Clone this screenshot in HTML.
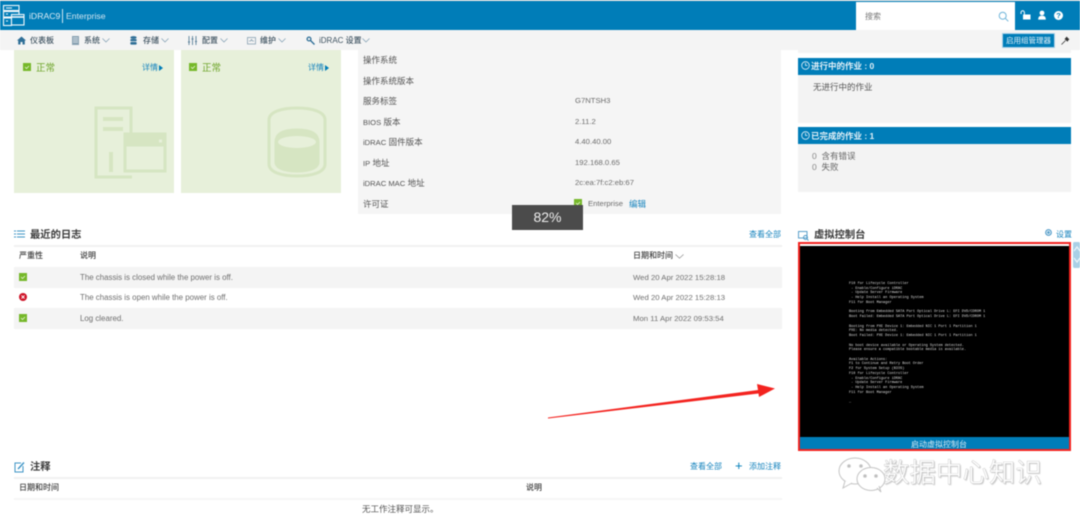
<!DOCTYPE html>
<html lang="zh"><head><meta charset="utf-8"><title>iDRAC9</title>
<style>
*{box-sizing:border-box}
html,body{margin:0;padding:0;background:#fff}
body{width:1080px;height:522px;overflow:hidden}
#p{position:relative;width:1080px;height:522px;overflow:hidden;font-family:"Liberation Sans","Noto Sans CJK SC",sans-serif;color:#555;filter:blur(.45px)}
#p div,#p svg{position:absolute}
.t{white-space:nowrap;line-height:1}
.n{font-size:8px;color:#3f5361;font-weight:500;top:36.500px}
.k{font-size:8.500px;color:#555;left:363px}
.k i{font-style:normal;font-size:7.600px}
.v{font-size:7.700px;color:#6c6c6c;left:575px}
.h{font-size:10.300px;font-weight:700;color:#3a3a3a}
.b{font-size:8px;color:#1583bd}
.s{font-size:8px;color:#3e3e3e;font-weight:500}
.g{font-size:7.900px;color:#6f6f6f}
.d{font-size:7.750px;color:#6f6f6f;left:633px}
.blue{background:#007db8}
</style></head><body><div id="p">

<div class="blue" style="left:0;top:1px;width:1080px;height:29px"></div>
<div style="left:0;top:0;width:1080px;height:1px;background:#ddd"></div>
<svg style="left:0;top:0" width="28" height="30" viewBox="0 0 28 30" fill="none" stroke="#f2f8fb" stroke-width="1.100"><rect x="3.500" y="5.500" width="15.500" height="5"/><rect x="3.500" y="11.500" width="15.500" height="5.500"/><rect x="3.500" y="18" width="8" height="7.500"/><path d="M6 8h6M6 14h2M6 21h2"/><rect x="11.500" y="14.500" width="12.500" height="10.500" fill="#007db8"/><path d="M11.500 17h12.500" stroke-width="1.600"/></svg>
<div class="t" style="left:29px;top:12px;font-size:8.700px;color:#dcecf5">iDRAC9</div>
<div style="left:62px;top:9px;width:1px;height:14px;background:#cfe5f1"></div>
<div class="t" style="left:66px;top:12px;font-size:8.700px;color:#cfe4f0">Enterprise</div>
<div style="left:856px;top:2px;width:159px;height:28px;background:#fff"></div>
<div class="t" style="left:865px;top:12.500px;font-size:8px;color:#777">搜索</div>
<svg style="left:998px;top:11px" width="11" height="11" viewBox="0 0 11 11" fill="none" stroke="#6fb5da" stroke-width="1"><circle cx="4.700" cy="4.700" r="3.500"/><path d="M7.300 7.300l3 3"/></svg>
<svg style="left:1020px;top:10px" width="11" height="10" viewBox="0 0 11 10" fill="none"><rect x="3" y="4.500" width="7.500" height="5" fill="#fff"/><path d="M1 4V2.500a1.700 1.700 0 0 1 3.400 0V5" stroke="#fff"/></svg>
<svg style="left:1037px;top:10px" width="10" height="10" viewBox="0 0 10 10" fill="#fff"><circle cx="5" cy="3" r="2.400"/><path d="M1.200 9.600c0-3 1.500-3.800 3.800-3.800s3.800.8 3.800 3.800z"/></svg>
<div style="left:1054px;top:11px;width:9px;height:9px;border-radius:50%;background:#fff;color:#007db8;font-size:7.500px;font-weight:700;line-height:9px;text-align:center">?</div>

<div style="left:0;top:30px;width:1080px;height:20px;background:#f4f4f4"></div>
<svg style="left:17px;top:36px" width="9" height="9" viewBox="0 0 9 9" fill="#2f6f97"><path d="M4.500.5L9 4.500H7.800V8.500H5.500V6H3.500V8.500H1.200V4.500H0z"/></svg>
<div class="t n" style="left:30px">仪表板</div>
<svg style="left:72px;top:36px" width="7" height="9" viewBox="0 0 7 9"><rect width="7" height="9" fill="#8aa2b2"/><path d="M1 2h5M1 4h5M1 6h5" stroke="#e8eef2" stroke-width=".7"/></svg>
<div class="t n" style="left:84px">系统</div>
<svg style="left:102px;top:38px" width="8" height="5" viewBox="0 0 8 5" fill="none" stroke="#7b9bb0" stroke-width=".7"><path d="M.5.5L4 4 7.500.5"/></svg>
<svg style="left:130px;top:36px" width="7" height="9" viewBox="0 0 7 9" fill="#2f6f97"><ellipse cx="3.500" cy="1.500" rx="3.200" ry="1.400"/><rect x=".3" y="3" width="6.400" height="2.200" rx="1"/><rect x=".3" y="6" width="6.400" height="2.600" rx="1"/></svg>
<div class="t n" style="left:143px">存储</div>
<svg style="left:161px;top:38px" width="8" height="5" viewBox="0 0 8 5" fill="none" stroke="#7b9bb0" stroke-width=".7"><path d="M.5.5L4 4 7.500.5"/></svg>
<svg style="left:188px;top:36px" width="9" height="9" viewBox="0 0 9 9" fill="none" stroke="#5b8099" stroke-width=".9"><path d="M1 0v9M4.500 0v9M8 0v9M0 6h2M3.500 3h2M7 5.500h2"/></svg>
<div class="t n" style="left:202px">配置</div>
<svg style="left:220px;top:38px" width="8" height="5" viewBox="0 0 8 5" fill="none" stroke="#7b9bb0" stroke-width=".7"><path d="M.5.5L4 4 7.500.5"/></svg>
<svg style="left:247px;top:37px" width="9" height="8" viewBox="0 0 9 8" fill="none" stroke="#8aa2b2" stroke-width=".8"><rect x=".5" y=".5" width="8" height="6.500"/><path d="M2 4h1.500l1-1.500L5.500 4H7"/></svg>
<div class="t n" style="left:260px">维护</div>
<svg style="left:278px;top:38px" width="8" height="5" viewBox="0 0 8 5" fill="none" stroke="#7b9bb0" stroke-width=".7"><path d="M.5.5L4 4 7.500.5"/></svg>
<svg style="left:306px;top:36px" width="9" height="9" viewBox="0 0 9 9" fill="none" stroke="#2f6f97" stroke-width="1.300"><circle cx="3" cy="3" r="1.900"/><path d="M4.500 4.500L8.500 8.500"/></svg>
<div class="t n" style="left:319px">iDRAC 设置</div>
<svg style="left:362px;top:38px" width="8" height="5" viewBox="0 0 8 5" fill="none" stroke="#7b9bb0" stroke-width=".7"><path d="M.5.5L4 4 7.500.5"/></svg>
<div class="t blue" style="left:1002px;top:33px;width:53px;height:15px;border:1px solid #a9d0e6;color:#e4f1f8;font-size:7.500px;line-height:14px;text-align:center">启用组管理器</div>
<svg style="left:1061px;top:36px" width="9" height="9" viewBox="0 0 9 9" fill="#333"><path d="M5.500.5L8.500 3.500 7.500 4 6.500 5.800 3.500 3 5 1.500z"/><path d="M4.500 4.500L.5 8.500" stroke="#333" stroke-width=".8"/></svg>

<!-- cards -->
<div style="left:14px;top:50px;width:160px;height:143px;background:#e7f0da"></div>
<div style="left:181px;top:50px;width:160px;height:143px;background:#e7f0da"></div>
<svg style="left:23px;top:63px" width="8" height="8" viewBox="0 0 8 8"><rect width="8" height="8" fill="#76b82a"/><path d="M2 4l1.500 1.500L6 3" fill="none" stroke="#e8f4d8" stroke-width=".8"/></svg>
<div class="t" style="left:36px;top:63.500px;font-size:9.500px;color:#6ea52a">正常</div>
<div class="t b" style="left:142px;top:63.500px">详情</div>
<div style="left:159px;top:64.500px;border-left:4px solid #007db8;border-top:3px solid transparent;border-bottom:3px solid transparent"></div>
<svg style="left:189px;top:63px" width="8" height="8" viewBox="0 0 8 8"><rect width="8" height="8" fill="#76b82a"/><path d="M2 4l1.500 1.500L6 3" fill="none" stroke="#e8f4d8" stroke-width=".8"/></svg>
<div class="t" style="left:202px;top:63.500px;font-size:9.500px;color:#6ea52a">正常</div>
<div class="t b" style="left:308px;top:63.500px">详情</div>
<div style="left:325px;top:64.500px;border-left:4px solid #007db8;border-top:3px solid transparent;border-bottom:3px solid transparent"></div>
<svg style="left:94px;top:106px" width="74" height="74" viewBox="0 0 74 74" fill="none" stroke="#d6e5c2"><path d="M37 27V2H2v69h36" stroke-width="3"/><path d="M9 13h20M9 23h20" stroke-width="4"/><path d="M17 46v20" stroke-width="4"/><rect x="31" y="28" width="40" height="37" stroke-width="3"/><path d="M31 35h40" stroke-width="11"/><path d="M65 35h3" stroke="#e7f0da" stroke-width="3"/></svg>
<svg style="left:267px;top:106px" width="60" height="72" viewBox="0 0 60 72" fill="none" stroke="#d6e5c2" stroke-width="3"><path d="M2 14C2 6 14 2 30 2s28 4 28 12v44c0 8-12 12-28 12S2 66 2 58z"/><path d="M9 36c0-9 9-12 21-12s21 3 21 12v20c0 6-9 9-21 9S9 62 9 56z" fill="#d6e5c2"/><ellipse cx="30" cy="36" rx="19" ry="6" fill="#e7f0da" stroke="none"/></svg>

<!-- info -->
<div style="left:358px;top:50px;width:423px;height:164px;background:#f5f5f5"></div>
<div class="t k" style="top:56px">操作系统</div>
<div class="t k" style="top:76.500px">操作系统版本</div>
<div class="t k" style="top:97px">服务标签</div>
<div class="t k" style="top:118px"><i>BIOS</i> 版本</div>
<div class="t k" style="top:138px"><i>iDRAC</i> 固件版本</div>
<div class="t k" style="top:159px"><i>IP</i> 地址</div>
<div class="t k" style="top:179px"><i>iDRAC MAC</i> 地址</div>
<div class="t k" style="top:200px">许可证</div>
<div class="t v" style="top:97px">G7NTSH3</div>
<div class="t v" style="top:118px">2.11.2</div>
<div class="t v" style="top:138px">4.40.40.00</div>
<div class="t v" style="top:159px">192.168.0.65</div>
<div class="t v" style="top:179px">2c:ea:7f:c2:eb:67</div>
<svg style="left:574px;top:199px" width="8" height="8" viewBox="0 0 8 8"><rect width="8" height="8" fill="#76b82a"/><path d="M2 4l1.500 1.500L6 3" fill="none" stroke="#e8f4d8" stroke-width=".8"/></svg>
<div class="t v" style="left:588px;top:199.500px">Enterprise</div>
<div class="t b" style="left:629px;top:199.500px;font-size:8.500px">编辑</div>
<div class="t" style="left:512px;top:205px;width:71px;height:25px;background:#4b4b4b;color:#eee;font-size:14px;line-height:25px;text-align:center">82%</div>

<!-- jobs -->
<div style="left:798px;top:50px;width:273px;height:3px;background:#f3f3f3"></div>
<div style="left:798px;top:75px;width:273px;height:48px;background:#f3f3f3"></div>
<div class="blue" style="left:798px;top:58px;width:273px;height:17px"></div>
<svg style="left:801px;top:61px" width="9" height="9" viewBox="0 0 9 9" fill="none" stroke="#e4f1f8" stroke-width=".8"><circle cx="4.500" cy="4.500" r="3.800"/><path d="M4.500 2v2.500H6.500"/></svg>
<div class="t" style="left:811px;top:62px;font-size:8.500px;font-weight:700;color:#e4f1f8">进行中的作业 : 0</div>
<div class="t" style="left:813px;top:83px;font-size:8.500px;color:#555">无进行中的作业</div>
<div style="left:798px;top:144px;width:273px;height:48px;background:#f3f3f3"></div>
<div class="blue" style="left:798px;top:127px;width:273px;height:17px"></div>
<svg style="left:801px;top:131px" width="9" height="9" viewBox="0 0 9 9" fill="none" stroke="#e4f1f8" stroke-width=".8"><circle cx="4.500" cy="4.500" r="3.800"/><path d="M4.500 2v2.500H6.500"/></svg>
<div class="t" style="left:811px;top:132px;font-size:8.500px;font-weight:700;color:#e4f1f8">已完成的作业 : 1</div>
<div class="t" style="left:812px;top:152px;font-size:8.500px;color:#666"><span style="color:#888">0</span>&nbsp; 含有错误</div>
<div class="t" style="left:812px;top:163px;font-size:8.500px;color:#666"><span style="color:#888">0</span>&nbsp; 失败</div>

<!-- log -->
<svg style="left:14px;top:230px" width="11" height="8" viewBox="0 0 11 8" stroke="#3d94c6" stroke-width="1"><path d="M3 1h8M3 4h8M3 7h8M0 1h2M0 4h2M0 7h2"/></svg>
<div class="t h" style="left:30px;top:231px">最近的日志</div>
<div class="t b" style="left:749px;top:231px">查看全部</div>
<div style="left:14px;top:245px;width:768px;height:2px;background:#f1f1f1"></div>
<div class="t s" style="left:19px;top:252px">严重性</div>
<div class="t s" style="left:80px;top:252px">说明</div>
<div class="t s" style="left:633px;top:252px">日期和时间</div>
<svg style="left:675px;top:254px" width="9" height="5" viewBox="0 0 9 5" fill="none" stroke="#888" stroke-width=".7"><path d="M.5.500L4.500 4.200 8.500.500"/></svg>
<div style="left:14px;top:267px;width:768px;height:21px;background:#f4f4f4"></div>
<div style="left:14px;top:308px;width:768px;height:21px;background:#f4f4f4"></div>
<svg style="left:19px;top:273px" width="8" height="8" viewBox="0 0 8 8"><rect width="8" height="8" fill="#76b82a"/><path d="M2 4l1.500 1.500L6 3" fill="none" stroke="#e8f4d8" stroke-width=".8"/></svg>
<svg style="left:19px;top:293px" width="8" height="8" viewBox="0 0 8 8"><circle cx="4" cy="4" r="4" fill="#ce1126"/><path d="M2.500 2.500l3 3M5.500 2.500l-3 3" stroke="#fff" stroke-width=".9"/></svg>
<svg style="left:19px;top:314px" width="8" height="8" viewBox="0 0 8 8"><rect width="8" height="8" fill="#76b82a"/><path d="M2 4l1.500 1.500L6 3" fill="none" stroke="#e8f4d8" stroke-width=".8"/></svg>
<div class="t g" style="left:80px;top:273.500px">The chassis is closed while the power is off.</div>
<div class="t g" style="left:80px;top:294px">The chassis is open while the power is off.</div>
<div class="t g" style="left:80px;top:314.500px">Log cleared.</div>
<div class="t d" style="top:273.500px">Wed 20 Apr 2022 15:28:18</div>
<div class="t d" style="top:294px">Wed 20 Apr 2022 15:28:13</div>
<div class="t d" style="top:314.500px">Mon 11 Apr 2022 09:53:54</div>

<!-- notes -->
<svg style="left:14px;top:461px" width="11" height="12" viewBox="0 0 11 12" fill="none" stroke="#3d94c6" stroke-width="1"><path d="M7 2H1v9h8V5"/><path d="M4 8l6-6.500" stroke-width="1.400"/></svg>
<div class="t h" style="left:30px;top:462.500px">注释</div>
<div class="t b" style="left:690px;top:462.500px">查看全部</div>
<div class="t" style="left:735px;top:459px;font-size:13px;color:#007db8">+</div>
<div class="t b" style="left:749px;top:462.500px">添加注释</div>
<div style="left:14px;top:477px;width:768px;height:2px;background:#f1f1f1"></div>
<div class="t s" style="left:19px;top:484px">日期和时间</div>
<div class="t s" style="left:526px;top:484px">说明</div>
<div style="left:14px;top:498px;width:768px;height:2px;background:#f6f6f6"></div>
<div class="t" style="left:362px;top:505px;font-size:8.500px;color:#555">无工作注释可显示。</div>

<!-- console -->
<svg style="left:798px;top:231px" width="11" height="10" viewBox="0 0 11 10" fill="none" stroke="#4a97c6" stroke-width=".9"><rect x=".5" y=".5" width="8.500" height="6.500"/><circle cx="7.500" cy="6.500" r="2"/><path d="M9 8l1.500 1.500"/></svg>
<div class="t h" style="left:814px;top:231px">虚拟控制台</div>
<svg style="left:1044px;top:228px" width="9" height="9" viewBox="0 0 9 9" fill="none" stroke="#4a97c6" stroke-width="1.100"><circle cx="4.500" cy="4.500" r="2.800"/><circle cx="4.500" cy="4.500" r=".8"/></svg>
<div class="t b" style="left:1056px;top:231px">设置</div>
<div style="left:798px;top:242px;width:273px;height:9px;background:#000"></div>
<div style="left:800px;top:244px;width:269px;height:2px;background:#fff"></div>
<div style="left:800px;top:246px;width:269px;height:191px;background:#000"></div>
<div class="blue" style="left:800px;top:437px;width:269px;height:13px"></div>
<div style="left:798px;top:242px;width:273px;height:209px;border:2px solid #f3231f"></div>
<div class="t" style="left:911px;top:441px;font-size:8px;color:#d8ebf5">启动虚拟控制台</div>
<svg style="left:1073px;top:242px" width="7" height="26" viewBox="0 0 7 26"><rect width="7" height="26" rx="1.500" fill="#a9d0e6"/><path d="M1 9l3-4 3 4M1 16l3 4 3-4" fill="none" stroke="#e9f4fa" stroke-width="1.300"/></svg>
<div style="left:849px;top:282px;color:#dedede;font:3.560px/4.730px 'Liberation Mono',monospace;white-space:pre">F10 for Lifecycle Controller
 - Enable/Configure iDRAC
 - Update Server Firmware
 - Help Install an Operating System
F11 for Boot Manager

Booting from Embedded SATA Port Optical Drive L: EFI DVD/CDROM 1
Boot Failed: Embedded SATA Port Optical Drive L: EFI DVD/CDROM 1

Booting from PXE Device 1: Embedded NIC 1 Port 1 Partition 1
PXE: No media detected.
Boot Failed: PXE Device 1: Embedded NIC 1 Port 1 Partition 1

No boot device available or Operating System detected.
Please ensure a compatible bootable media is available.

Available Actions:
F1 to Continue and Retry Boot Order
F2 for System Setup (BIOS)
F10 for Lifecycle Controller
 - Enable/Configure iDRAC
 - Update Server Firmware
 - Help Install an Operating System
F11 for Boot Manager

_</div>

<!-- arrow -->
<svg style="left:545px;top:380px" width="235" height="42" viewBox="0 0 235 42"><path d="M3 37.500L213 10 212 4 230 8.500 214 17 213.500 13.500 3 38.500z" fill="#f3231f"/></svg>

<!-- watermark -->
<svg style="left:835px;top:453px" width="55" height="40" viewBox="0 0 55 40" fill="#fff" stroke="#c4c4c4" stroke-width="1"><ellipse cx="20" cy="18" rx="16" ry="13"/><path d="M10 28L8 35 17 30"/><ellipse cx="36" cy="26" rx="14" ry="11.500"/><path d="M42 35L46 39 44 33"/><circle cx="14" cy="13" r="1.300" fill="#bbb"/><circle cx="26" cy="13" r="1.300" fill="#bbb"/><circle cx="30" cy="23" r="1.300" fill="#bbb"/><circle cx="41" cy="23" r="1.300" fill="#bbb"/></svg>
<div class="t" style="left:883px;top:460px;font-size:26.500px;color:#fff;-webkit-text-stroke:.35px #bdbdbd;text-shadow:1px 1px 1px #c8c8c8">数据中心知识</div>

</div></body></html>
